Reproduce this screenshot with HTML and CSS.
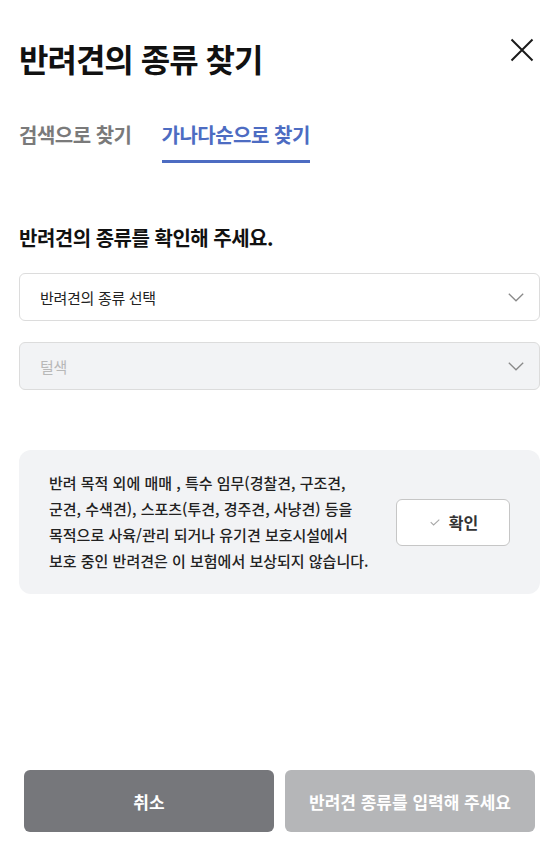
FILE: index.html
```html
<!DOCTYPE html>
<html lang="ko">
<head>
<meta charset="utf-8">
<title>반려견의 종류 찾기</title>
<link rel="stylesheet" href="styles.css">
</head>
<body>
<div class="modal">
  <header class="head">
    <h1 class="title">반려견의 종류 찾기</h1>
    <button class="close" aria-label="닫기">
      <svg width="24" height="24" viewBox="0 0 24 24"><path d="M1.5 1.5 L22.5 22.5 M22.5 1.5 L1.5 22.5" stroke="#1a1a1a" stroke-width="2" fill="none"/></svg>
    </button>
  </header>
  <nav class="tabs">
    <span class="tab">검색으로 찾기</span>
    <span class="tab active">가나다순으로 찾기</span>
  </nav>
  <section class="form">
    <h2 class="subtitle">반려견의 종류를 확인해 주세요.</h2>
    <div class="select">
      <span>반려견의 종류 선택</span>
      <svg class="chev" width="16" height="9" viewBox="0 0 16 9"><path d="M0.8 0.8 L8 7.8 L15.2 0.8" stroke="#8a8a8a" stroke-width="1.3" fill="none"/></svg>
    </div>
    <div class="select disabled">
      <span>털색</span>
      <svg class="chev" width="16" height="9" viewBox="0 0 16 9"><path d="M0.8 0.8 L8 7.8 L15.2 0.8" stroke="#8a8a8a" stroke-width="1.3" fill="none"/></svg>
    </div>
  </section>
  <div class="notice">
    <p class="notice-text">반려 목적 외에 매매 , 특수 임무(경찰견, 구조견,<br>군견, 수색견), 스포츠(투견, 경주견, 사냥견) 등을<br>목적으로 사육/관리 되거나 유기견 보호시설에서<br>보호 중인 반려견은 이 보험에서 보상되지 않습니다.</p>
    <button class="confirm">
      <svg width="10" height="7" viewBox="0 0 10 7"><path d="M0.7 3.2 L3.6 6 L9.3 0.6" stroke="#a8a8a8" stroke-width="1.1" fill="none"/></svg>
      <span>확인</span>
    </button>
  </div>
  <footer class="actions">
    <button class="btn cancel">취소</button>
    <button class="btn submit">반려견 종류를 입력해 주세요</button>
  </footer>
</div>
</body>
</html>
```

FILE: styles.css
```css
* { box-sizing: border-box; }
html, body { margin: 0; padding: 0; background: #fff; }
body {
  font-family: "Noto Sans CJK KR", "Noto Sans", sans-serif;
  color: #1a1a1a;
}
.modal {
  width: 556px;
  height: 850px;
  display: flex;
  flex-direction: column;
}
.head {
  display: flex;
  justify-content: space-between;
  align-items: flex-start;
  padding: 38px 22px 0 19px;
}
.title {
  margin: 0;
  font-size: 32px;
  line-height: 40px;
  font-weight: 700;
  letter-spacing: -1px;
  color: #111;
}
.close {
  border: 0;
  background: none;
  padding: 0;
  width: 24px;
  height: 24px;
  display: flex;
}
.tabs {
  display: flex;
  gap: 30px;
  padding: 0 19px;
  margin-top: 45px;
}
.tab {
  font-size: 20px;
  font-weight: 700;
  line-height: 24px;
  letter-spacing: -0.5px;
  color: #7a7a7a;
  padding-bottom: 13px;
  border-bottom: 3px solid transparent;
}
.tab.active {
  color: #4d6cc2;
  border-bottom-color: #4d6cc2;
}
.form {
  padding: 0 16px 0 19px;
  margin-top: 62px;
  display: flex;
  flex-direction: column;
  gap: 21px;
}
.subtitle {
  margin: 0 0 1px;
  font-size: 20px;
  line-height: 26px;
  font-weight: 700;
  letter-spacing: -0.5px;
  color: #111;
}
.select {
  height: 48px;
  border: 1px solid #dcdcdc;
  border-radius: 6px;
  display: flex;
  align-items: center;
  justify-content: space-between;
  padding: 0 15px 0 20px;
  font-size: 15px;
  letter-spacing: -0.3px;
  color: #222;
  background: #fff;
}
.select.disabled {
  background: #f2f3f5;
  color: #b8b8b8;
}
.notice {
  margin: 60px 16px 0 19px;
  background: #f2f3f5;
  border-radius: 12px;
  padding: 20px 30px;
  display: flex;
  align-items: center;
  justify-content: space-between;
}
.notice-text {
  margin: 0;
  font-size: 15px;
  line-height: 26px;
  font-weight: 500;
  letter-spacing: 0;
  color: #222;
}
.confirm {
  width: 114px;
  height: 47px;
  border: 1px solid #c6c6c6;
  border-radius: 6px;
  background: #fff;
  display: flex;
  align-items: center;
  justify-content: center;
  gap: 9px;
  font-family: inherit;
  font-size: 16px;
  font-weight: 700;
  color: #333;
  padding: 0 0 0 2px;
}
.actions {
  margin-top: auto;
  display: flex;
  gap: 11px;
  padding: 0 21px 18px 24px;
}
.btn {
  flex: 1;
  height: 62px;
  border: 0;
  border-radius: 6px;
  font-family: inherit;
  font-size: 17px;
  font-weight: 700;
  letter-spacing: 0;
  color: #fff;
}
.cancel { background: #76777b; }
.submit { background: #b5b6b8; }
```
